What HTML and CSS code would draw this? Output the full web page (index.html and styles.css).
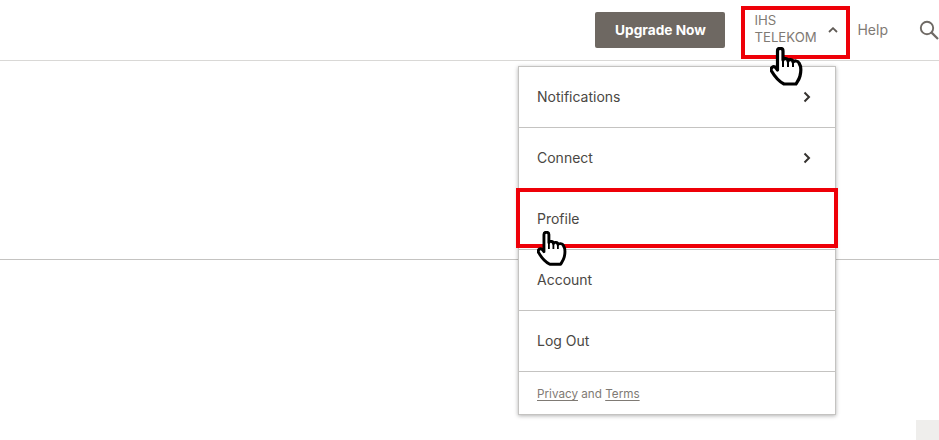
FILE: index.html
```html
<!DOCTYPE html>
<html lang="en">
<head>
    <meta charset="UTF-8">
    <meta name="viewport" content="width=device-width, initial-scale=1.0">
    <title>Account menu</title>
    <link rel="stylesheet" href="styles.css">
</head>
<body>
    <header class="topbar">
        <a class="upgrade-btn">Upgrade Now</a>
        <a class="account-link">
            <span class="account-name">IHS TELEKOM</span>
            <svg class="account-chevron" width="10" height="6" viewBox="0 0 10 6"><path d="M1 5 L5 1.2 L9 5" fill="none" stroke="#5f5a55" stroke-width="1.8"/></svg>
        </a>
        <a class="help-link">Help</a>
        <svg class="search-icon" width="20" height="20" viewBox="0 0 20 20"><circle cx="8" cy="8" r="6.2" fill="none" stroke="#6f6a65" stroke-width="1.9"/><path d="M12.6 12.6 L19 19" fill="none" stroke="#6f6a65" stroke-width="2.2"/></svg>
    </header>

    <div class="content-rule"></div>

    <nav class="account-menu">
        <a class="menu-row">Notifications
            <svg width="8" height="12" viewBox="0 0 8 12"><path d="M1.5 1.5 L6 6 L1.5 10.5" fill="none" stroke="#35322f" stroke-width="2"/></svg>
        </a>
        <a class="menu-row">Connect
            <svg width="8" height="12" viewBox="0 0 8 12"><path d="M1.5 1.5 L6 6 L1.5 10.5" fill="none" stroke="#35322f" stroke-width="2"/></svg>
        </a>
        <a class="menu-row">Profile</a>
        <a class="menu-row">Account</a>
        <a class="menu-row">Log Out</a>
        <div class="menu-footer"><a>Privacy</a> and <a>Terms</a></div>
    </nav>

    <!-- red markers and pointers on top of the screenshot -->
    <div class="marker marker-account"></div>
    <div class="marker marker-profile"></div>

    <svg class="pointer pointer-account" width="34" height="40" viewBox="0 0 34 40">
        <path d="M7.5 4 C7.5 0.5 13 0.5 13 4 V13 C13.5 11 18 11 18 14 C18.5 12 23 12 23 15 C24 13.5 28 13.5 29 16 C31 19 31 25 30 29 C29 33 27 35 26 37 H14 C10 35 5 30 1.5 24 C0 21 3.5 18 6 21 L7.5 23 Z" fill="#fff" stroke="#000" stroke-width="3.2" stroke-linejoin="round"/>
        <path d="M13 13 V20 M18 14 V20 M23 15 V20" fill="none" stroke="#000" stroke-width="2"/>
    </svg>
    <svg class="pointer pointer-profile" width="31" height="36" viewBox="0 0 34 40">
        <path d="M7.5 4 C7.5 0.5 13 0.5 13 4 V13 C13.5 11 18 11 18 14 C18.5 12 23 12 23 15 C24 13.5 28 13.5 29 16 C31 19 31 25 30 29 C29 33 27 35 26 37 H14 C10 35 5 30 1.5 24 C0 21 3.5 18 6 21 L7.5 23 Z" fill="#fff" stroke="#000" stroke-width="3.2" stroke-linejoin="round"/>
        <path d="M13 13 V20 M18 14 V20 M23 15 V20" fill="none" stroke="#000" stroke-width="2"/>
    </svg>

    <div class="corner-box"></div>
</body>
</html>
```

FILE: styles.css
```css
/* Basic page */
html, body {
    height: 100%;
}
body {
    position: relative;
    margin: 0;
    overflow: hidden;
    background-color: #fff;
    font-family: Inter, "Liberation Sans", sans-serif;
    font-size: 14px;
    color: #4a4743;
}

/* Top bar */
.topbar {
    display: flex;
    align-items: center;
    justify-content: flex-end;
    box-sizing: border-box;
    height: 61px;
    border-bottom: 1px solid #d9d8d6;
}
.upgrade-btn {
    display: flex;
    align-items: center;
    justify-content: center;
    box-sizing: border-box;
    width: 130px;
    height: 36px;
    margin-right: 29px;
    border-radius: 2px;
    background-color: #6e6862;
    color: #fff;
    font-size: 13.7px;
    font-weight: 700;
}
.account-link {
    display: flex;
    align-items: center;
    width: 84px;
    margin-right: 19px;
    color: #7f7a74;
}
.account-name {
    width: 70px;
    flex: none;
    padding-bottom: 2px;
    font-size: 13.2px;
    line-height: 17px;
}
.account-chevron {
    margin-left: 4px;
    flex: none;
}
.help-link {
    margin-right: 31px;
    padding-bottom: 2px;
    color: #7f7a74;
}
.search-icon {
    flex: none;
}

/* Rule behind the menu */
.content-rule {
    height: 198px;
    border-bottom: 1px solid #c4c3c1;
}

/* Dropdown */
.account-menu {
    position: absolute;
    top: 66px;
    left: 518px;
    width: 316px;
    border: 1px solid #c4c3c1;
    background-color: #fff;
    box-shadow: 0 1px 4px rgba(0, 0, 0, 0.3);
}
.menu-row {
    display: flex;
    align-items: center;
    justify-content: space-between;
    box-sizing: border-box;
    height: 61px;
    padding: 0 24px 2px 18px;
    border-bottom: 1px solid #c4c3c1;
}
.menu-row svg {
    margin-top: 2px;
}
.menu-footer {
    height: 42px;
    padding-left: 18px;
    font-size: 11.7px;
    line-height: 44px;
    color: #7f7a74;
}
.menu-footer a {
    text-decoration: underline;
    text-underline-offset: 2px;
}

/* Markers */
.marker {
    position: absolute;
    box-sizing: border-box;
    border: 4px solid #ee0008;
}
.marker-account {
    top: 6px;
    left: 741px;
    width: 109px;
    height: 53px;
}
.marker-profile {
    top: 188px;
    left: 516px;
    width: 322px;
    height: 60px;
}
.pointer {
    position: absolute;
}
.pointer-account {
    top: 47px;
    left: 770px;
}
.pointer-profile {
    top: 231px;
    left: 537px;
}
.corner-box {
    position: absolute;
    top: 420px;
    left: 916px;
    width: 23px;
    height: 20px;
    background-color: #efeeec;
}
```
